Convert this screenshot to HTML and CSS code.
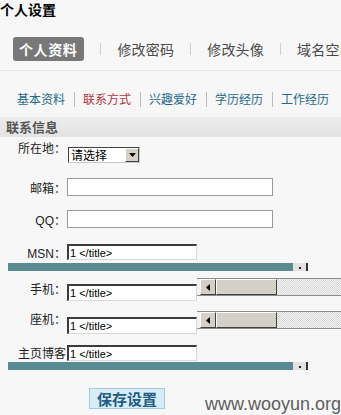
FILE: index.html
```html
<!DOCTYPE html>
<html lang="zh-CN">
<head>
<meta charset="utf-8">
<title>个人设置</title>
<link rel="stylesheet" href="styles.css">
</head>
<body>
<div class="page">
  <h1 class="title">个人设置</h1>
  <div class="tabs">
    <span class="tab tab-active">个人资料</span>
    <span class="sep"></span>
    <span class="tab">修改密码</span>
    <span class="sep"></span>
    <span class="tab">修改头像</span>
    <span class="sep"></span>
    <span class="tab">域名空间</span>
  </div>
  <div class="subtabs">
    <span class="sub">基本资料</span>
    <span class="subsep"></span>
    <span class="sub sub-active">联系方式</span>
    <span class="subsep"></span>
    <span class="sub">兴趣爱好</span>
    <span class="subsep"></span>
    <span class="sub">学历经历</span>
    <span class="subsep"></span>
    <span class="sub">工作经历</span>
  </div>
  <div class="section-head">联系信息</div>
  <div class="form">
    <div class="row row-loc">
      <span class="label label-loc">所在地：</span>
      <div class="select">
        <span class="select-text">请选择</span>
        <span class="select-btn"><svg width="7" height="4" viewBox="0 0 7 4"><path d="M0 0h7L3.5 4z" fill="#000"/></svg></span>
      </div>
    </div>
    <div class="row row-mail">
      <span class="label label-mid">邮箱：</span>
      <input class="field-empty" type="text">
    </div>
    <div class="row row-qq">
      <span class="label label-mid">QQ：</span>
      <input class="field-empty" type="text">
    </div>
    <div class="row row-msn">
      <span class="label label-msn">MSN：</span>
      <input class="field" type="text" value="1 </title>">
    </div>
    <div class="hbar"><span class="hbar-fill"></span><span class="hbar-btn"><i class="hbar-dot"></i></span></div>
    <div class="row row-mobile">
      <span class="label label-mobile">手机：</span>
      <input class="field field-low" type="text" value="1 </title>">
      <div class="scroll">
        <span class="sb-arrow"><svg width="4" height="7" viewBox="0 0 4 7"><path d="M4 0v7L0 3.5z" fill="#000"/></svg></span>
        <span class="sb-thumb"></span>
        <span class="sb-track"></span>
      </div>
    </div>
    <div class="row row-phone">
      <span class="label label-phone">座机：</span>
      <input class="field field-low" type="text" value="1 </title>">
      <div class="scroll">
        <span class="sb-arrow"><svg width="4" height="7" viewBox="0 0 4 7"><path d="M4 0v7L0 3.5z" fill="#000"/></svg></span>
        <span class="sb-thumb"></span>
        <span class="sb-track"></span>
      </div>
    </div>
    <div class="row row-blog">
      <span class="label label-blog">主页博客</span>
      <input class="field" type="text" value="1 </title>">
    </div>
    <div class="hbar"><span class="hbar-fill"></span><span class="hbar-btn"><i class="hbar-dot"></i></span></div>
    <div class="actions">
      <button class="save" type="button">保存设置</button>
    </div>
  </div>
  <div class="watermark">www.wooyun.org</div>
</div>
</body>
</html>
```
FILE: styles.css
```css
html, body {
  margin: 0;
  padding: 0;
}
body {
  background: #f7f7f7;
  font-family: "Noto Sans CJK SC", sans-serif;
  color: #222;
  overflow: hidden;
}
.page {
  position: relative;
  width: 341px;
  height: 415px;
  overflow: hidden;
}
.title {
  margin: 0;
  padding-top: 1px;
  font-size: 14px;
  font-weight: bold;
  line-height: 17px;
  color: #000;
}
.tabs {
  display: flex;
  align-items: center;
  gap: 16px;
  margin-top: 19px;
  padding-left: 13px;
  padding-bottom: 9px;
  border-bottom: 1px solid #e4e4e4;
  white-space: nowrap;
}
.tab {
  font-size: 14px;
  line-height: 24px;
  height: 24px;
  color: #4a4a4a;
  letter-spacing: 0.2px;
}
.tab-active {
  background: #787878;
  color: #fff;
  font-weight: bold;
  padding: 0 7px 0 6px;
  border-radius: 3px;
  letter-spacing: 0.6px;
}
.sep {
  width: 1px;
  height: 12px;
  background: #d0d0d0;
  flex: none;
}
.subtabs {
  display: flex;
  align-items: center;
  margin-top: 19px;
  padding-left: 17px;
  height: 18px;
  white-space: nowrap;
}
.sub {
  font-size: 12px;
  line-height: 18px;
  color: #1e6a8a;
}
.sub-active {
  color: #b3343a;
}
.subsep {
  width: 1px;
  height: 15px;
  background: #bcbcbc;
  margin: 0 8px 0 9px;
  flex: none;
}
.section-head {
  margin-top: 9px;
  height: 20px;
  line-height: 20px;
  padding-left: 6px;
  font-size: 13px;
  font-weight: bold;
  color: #555;
  background: linear-gradient(#ececec, #e3e3e3);
}
.form {
  padding-top: 4px;
}
.row {
  display: flex;
  align-items: flex-start;
}
.label {
  width: 66px;
  flex: none;
  text-align: right;
  font-family: "Liberation Sans", "Noto Sans CJK TC", sans-serif;
  font-size: 12px;
  line-height: 16px;
  color: #222;
  white-space: nowrap;
}
.label-loc { margin-top: 0; }
.label-mid { margin-top: 3px; }
.label-msn { margin-top: 2px; }
.label-mobile { margin-top: 4px; }
.label-phone { margin-top: 1px; }
.label-blog { margin-top: 0; font-family: "Noto Sans CJK SC", sans-serif; }

.row-mail { margin-top: 15px; }
.row-qq { margin-top: 13px; }
.row-msn { margin-top: 15px; }
.row-mobile { margin-top: 7px; }
.row-phone { margin-top: 10px; }
.row-blog { margin-top: 11px; }

.select {
  margin-top: 6px;
  margin-left: 2px;
  width: 72px;
  height: 16px;
  box-sizing: border-box;
  display: flex;
  background: #fff;
  border-top: 1px solid #404040;
  border-left: 1px solid #404040;
  border-right: 1px solid #c8c8c8;
  border-bottom: 1px solid #c8c8c8;
}
.select-text {
  flex: 1;
  font-size: 12px;
  line-height: 14px;
  padding-left: 2px;
  color: #000;
}
.select-btn {
  width: 14px;
  height: 14px;
  box-sizing: border-box;
  background: #d4d0c8;
  border-top: 1px solid #fff;
  border-left: 1px solid #fff;
  border-right: 1px solid #404040;
  border-bottom: 1px solid #404040;
  display: flex;
  align-items: center;
  justify-content: center;
}
.field-empty {
  margin: 0 0 0 1px;
  width: 206px;
  height: 18px;
  box-sizing: border-box;
  padding: 0 2px;
  border: 1px solid #9a9a9a;
  background: #fff;
  font-size: 12px;
  outline: none;
}
.field {
  margin: 0 0 0 1px;
  width: 130px;
  height: 16px;
  box-sizing: border-box;
  padding: 0 1px;
  background: #fff;
  border-top: 2px solid #3c3c3c;
  border-left: 2px solid #3c3c3c;
  border-right: 1px solid #d8d8d8;
  border-bottom: 1px solid #d8d8d8;
  font-family: "Liberation Sans", sans-serif;
  font-size: 11px;
  line-height: 13px;
  color: #000;
  outline: none;
}
.field-low {
  margin-top: 6px;
  height: 17px;
}
.hbar {
  display: flex;
  margin-top: 1px;
  margin-left: 8px;
  height: 8px;
}
.hbar-fill {
  width: 285px;
  background: #5b8b92;
}
.hbar-btn {
  width: 15px;
  box-sizing: border-box;
  background: #e2e2e2;
  border-right: 2px solid #333;
  display: flex;
  align-items: flex-end;
  justify-content: center;
}
.hbar-dot {
  width: 2px;
  height: 2px;
  background: #222;
  margin-bottom: 2px;
}
.scroll {
  display: flex;
  flex: none;
  width: 144px;
  height: 18px;
  box-sizing: border-box;
  border-top: 1px solid #8c8c8c;
  border-bottom: 1px solid #8c8c8c;
  padding-left: 3px;
  background: #f2f2f2;
}
.sb-arrow {
  width: 16px;
  flex: none;
  box-sizing: border-box;
  background: #d4d0c8;
  border-top: 1px solid #fff;
  border-left: 1px solid #fff;
  border-right: 1px solid #404040;
  border-bottom: 1px solid #404040;
  display: flex;
  align-items: center;
  justify-content: center;
}
.sb-thumb {
  width: 61px;
  flex: none;
  box-sizing: border-box;
  background: #d4d0c8;
  border-top: 1px solid #fff;
  border-left: 1px solid #fff;
  border-right: 1px solid #404040;
  border-bottom: 1px solid #404040;
}
.sb-track {
  flex: 1;
  background: repeating-conic-gradient(#d6d6d6 0 25%, #f6f6f6 0 50%) 0 0 / 2px 2px;
}
.actions {
  margin-top: 16px;
  padding-left: 89px;
}
.save {
  margin: 0;
  width: 76px;
  height: 21px;
  padding: 0;
  box-sizing: border-box;
  background: #d6ecf6;
  border: 1px solid #a3cadf;
  font-family: "Noto Sans CJK SC", sans-serif;
  font-size: 15px;
  font-weight: bold;
  line-height: 19px;
  color: #235b82;
  letter-spacing: 0;
}
.watermark {
  position: absolute;
  right: 0;
  bottom: 1px;
  font-family: "Liberation Sans", sans-serif;
  font-size: 18px;
  line-height: 20px;
  color: #5e5e5e;
}
```
